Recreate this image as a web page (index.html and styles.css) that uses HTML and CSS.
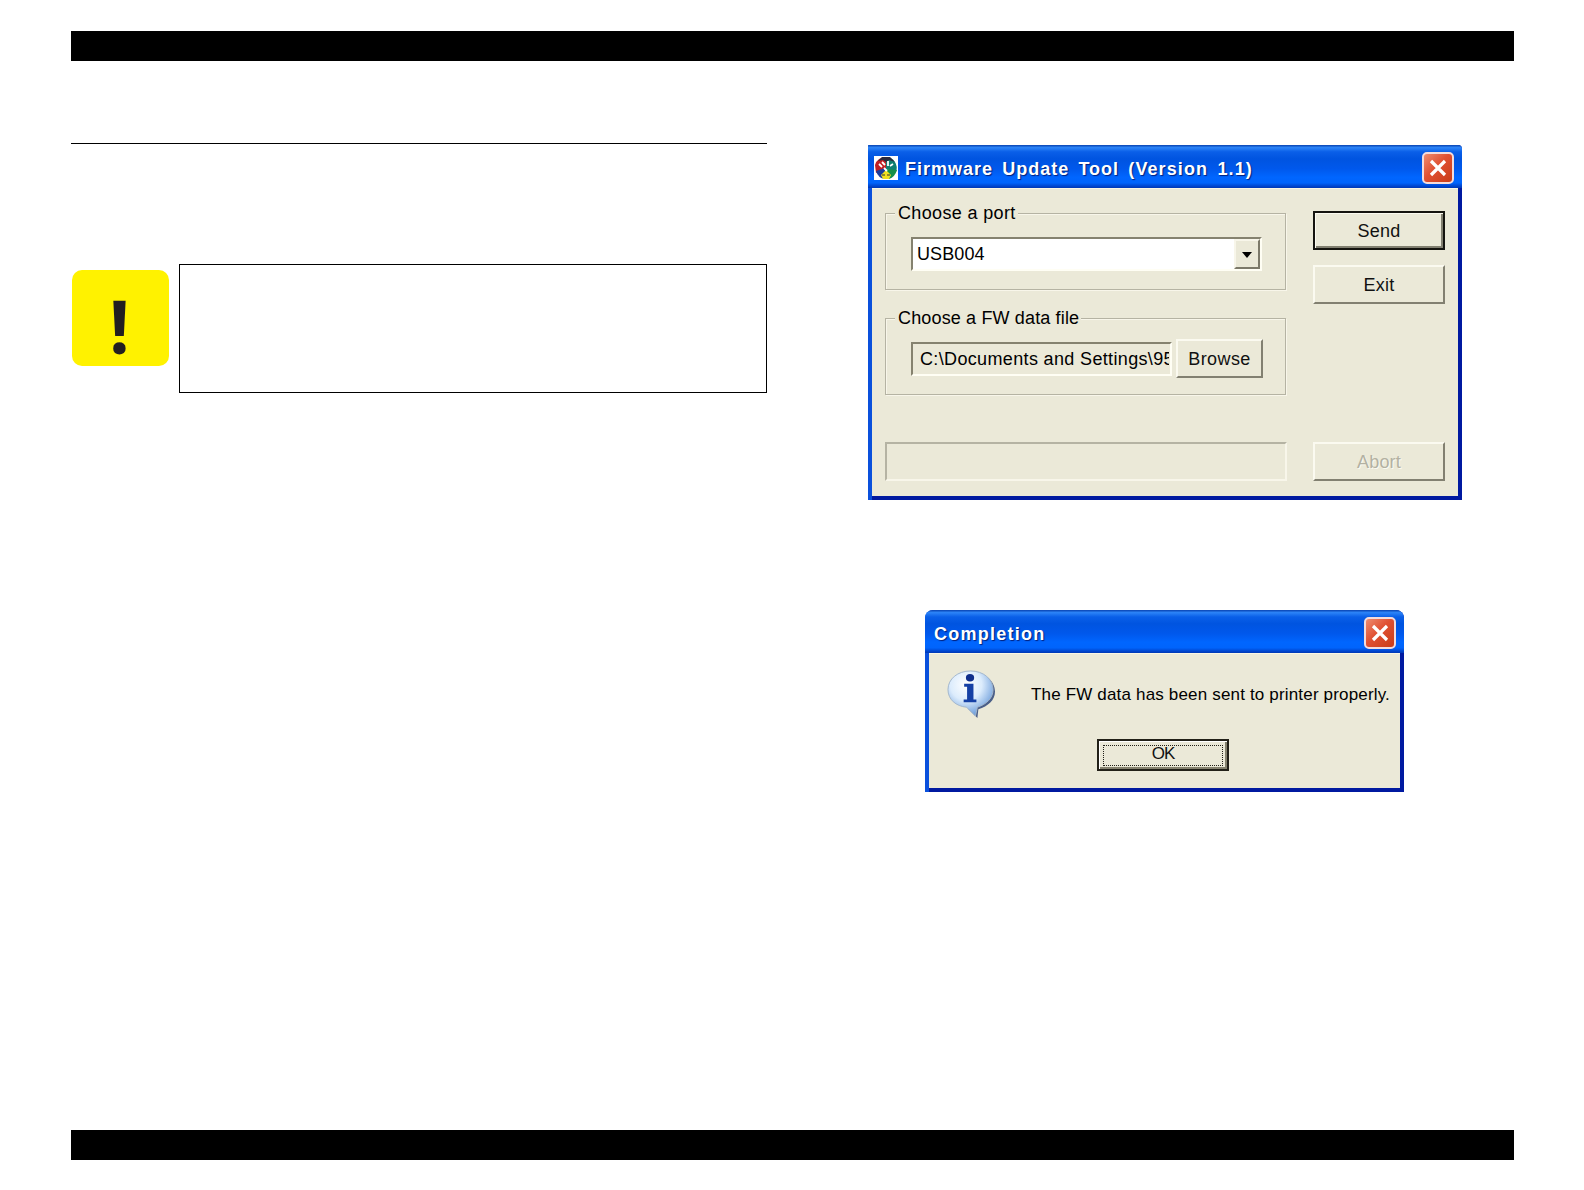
FILE: index.html
```html
<!DOCTYPE html>
<html lang="en">
<head>
  <meta charset="UTF-8">
  <meta name="viewport" content="width=device-width, initial-scale=1.0">
  <title>Firmware Update Tool</title>
  <link rel="stylesheet" href="styles.css">
</head>
<body>

  <div class="page">
    <header class="page-bar"></header>

    <main class="columns">
      <section class="left-column">
        <hr class="rule">
        <div class="caution">
          <div class="caution-icon"><span>!</span></div>
          <div class="caution-box"></div>
        </div>
      </section>

      <section class="right-column">
        <div class="window update-window">
          <div class="title-bar">
            <svg class="app-icon" viewBox="0 0 24 24">
              <rect width="24" height="24" fill="#fff"/>
              <path d="M1 9 A11 11 0 0 1 12 1 V13 L2 17 Z" fill="#c02024"/>
              <path d="M12 1 A11 11 0 0 1 22 16 L12 13 Z" fill="#0f7f72"/>
              <path d="M2 15 L11 12 V23 Q4 22 2 15 Z" fill="#1b3c9c"/>
              <path d="M12 13 L23 14 Q21 21 15 23 Z" fill="#169048"/>
              <path d="M7 19 L12 14 L17 19 L15 23 H9 Z" fill="#f3df20"/>
              <path d="M4 5 L8 1 H16 L21 6 L15 4 L12 6 L9 4 Z" fill="#2b2a3c"/>
              <path d="M5 8 L8 11 M8 6 L11 9 M14 5 V10 M16 10 L19 8 M10 12 L13 15" stroke="#fff" stroke-width="1.8"/>
              <path d="M8 19 H11 M13 19 H16" stroke="#333" stroke-width="1.2"/>
            </svg>
            <h1 class="title">Firmware Update Tool <span class="version">(Version 1.1)</span></h1>
            <button class="close-button" aria-label="Close">
              <svg viewBox="0 0 18 18"><path d="M2 2 L16 16 M16 2 L2 16"/></svg>
            </button>
          </div>

          <div class="window-body update-body">
            <div class="fields">
              <fieldset class="group">
                <legend class="port-legend">Choose a port</legend>
                <div class="combo">
                  <span class="combo-value">USB004</span>
                  <button class="combo-button" aria-label="Open list"><i class="arrow"></i></button>
                </div>
              </fieldset>
              <fieldset class="group file-group">
                <legend class="file-legend">Choose a FW data file</legend>
                <div class="file-row">
                  <div class="file-path"><span>C:\Documents and Settings\95</span></div>
                  <button class="button browse-button">Browse</button>
                </div>
              </fieldset>
              <div class="progress"></div>
            </div>
            <div class="actions">
              <button class="button default-button">Send</button>
              <button class="button">Exit</button>
              <button class="button abort-button" disabled>Abort</button>
            </div>
          </div>
        </div>

        <div class="window completion-window">
          <div class="title-bar">
            <h1 class="title completion-title">Completion</h1>
            <button class="close-button" aria-label="Close">
              <svg viewBox="0 0 18 18"><path d="M2 2 L16 16 M16 2 L2 16"/></svg>
            </button>
          </div>
          <div class="window-body completion-body">
            <div class="message-row">
              <svg class="info-icon" viewBox="0 0 50 50">
                <defs>
                  <radialGradient id="bubble" cx="0.4" cy="0.3" r="0.7">
                    <stop offset="0" stop-color="#fff"/>
                    <stop offset="0.5" stop-color="#dcecfc"/>
                    <stop offset="1" stop-color="#6c9ddb"/>
                  </radialGradient>
                </defs>
                <path d="M26 3 C39 3 49 11 49 22 C49 31 42 37 32 40 L31 49 L22 40 Z" fill="#4b5f88"/>
                <path d="M24 1 C37 1 47 9 47 20 C47 29 40 35 31 38 L29 47 L20 38 C9 37 1 30 1 20 C1 9 11 1 24 1 Z" fill="url(#bubble)" stroke="#a3b6cc" stroke-width="1"/>
                <ellipse cx="23.5" cy="8" rx="4.2" ry="3.8" fill="#102f8c"/>
                <path d="M17.5 14 H27 V30 H30 V33 H17 V30 H20.5 V17 H17.5 Z" fill="#1540a5"/>
              </svg>
              <p class="message">The FW data has been sent to printer properly.</p>
            </div>
            <button class="button ok-button"><span>OK</span></button>
          </div>
        </div>
      </section>
    </main>

    <footer class="page-bar"></footer>
  </div>

</body>
</html>
```
FILE: styles.css
```css
* {
  box-sizing: border-box;
}
body {
  margin: 0;
  background-color: #fff;
  font-family: "Liberation Sans", Arial, sans-serif;
}
.page {
  display: flex;
  flex-direction: column;
  width: 1584px;
  height: 1190px;
  padding: 31px 70px 30px 71px;
}
.page-bar {
  flex: none;
  height: 30px;
  background-color: #000;
}
.columns {
  display: flex;
  flex: 1;
  gap: 101px;
}

/* Left column */
.left-column {
  width: 696px;
  padding-top: 82px;
}
.rule {
  height: 1px;
  margin: 0 0 120px;
  border: none;
  background-color: #000;
}
.caution {
  display: flex;
  justify-content: space-between;
}
.caution-icon {
  display: flex;
  justify-content: center;
  width: 97px;
  height: 96px;
  margin: 6px 0 0 1px;
  border-radius: 10px;
  background-color: #fff200;
  color: #231f20;
  font: bold 73px/97px "Open Sans", sans-serif;
}
.caution-icon span {
  padding: 7px 2px 0 0;
}
.caution-box {
  width: 588px;
  height: 129px;
  border: 1px solid #000;
}

/* Windows */
.right-column {
  padding-top: 84px;
}
.window {
  display: flex;
  flex-direction: column;
  border-radius: 8px 8px 0 0;
  background: linear-gradient(90deg, #0a50dc 0, #0a50dc 50%, #0019a0 100%);
}
.update-window {
  width: 594px;
  height: 355px;
  border-radius: 1px 4px 0 0;
}
.completion-window {
  width: 479px;
  height: 182px;
  margin: 110px 0 0 57px;
}
.title-bar {
  display: flex;
  flex: none;
  align-items: center;
  height: 43px;
  padding: 3px 8px 0 6px;
  border-radius: inherit;
  background: linear-gradient(#0842b0 0, #2c84f8 6%, #0a5fe8 16%, #0054e0 32%, #0058ec 55%, #0066ff 75%, #0064fc 88%, #0044cc 96%, #0038b4 100%);
}
.app-icon {
  width: 24px;
  height: 24px;
  margin-right: 7px;
}
.title {
  flex: 1;
  margin: 0;
  padding-top: 2px;
  color: #fff;
  font-size: 18px;
  line-height: 24px;
  letter-spacing: 1px;
  word-spacing: 3.2px;
  white-space: nowrap;
  text-shadow: 1px 1px 1px #00207c;
}
.version {
  letter-spacing: 1.1px;
}
.completion-title {
  padding-left: 3px;
  letter-spacing: 1.25px;
}
.close-button {
  display: flex;
  align-items: center;
  justify-content: center;
  width: 32px;
  height: 32px;
  padding: 0;
  border: 2px solid #f4dcdc;
  border-radius: 5px;
  background: linear-gradient(135deg, #ee8c70, #e05032 45%, #c83c18);
}
.close-button svg {
  width: 18px;
  height: 18px;
  fill: none;
  stroke: #fff;
  stroke-width: 3.2;
}
.window-body {
  flex: 1;
  margin: 0 4px 4px;
  border: 1px solid #fbf6e4;
  border-width: 1px 0 0;
  background-color: #ebe9d8;
  box-shadow: 0 4px 0 #0019a0;
}

/* Update window */
.update-body {
  display: flex;
  gap: 26px;
  padding: 14px 12px 14px 13px;
  font-size: 18px;
}
.fields {
  display: flex;
  flex-direction: column;
  width: 402px;
}
.group {
  min-width: 0;
  height: 87px;
  margin: 0 1px 0 0;
  padding: 14px 0 0 25px;
  border: 1px solid #b5b3a3;
  box-shadow: 1px 1px #f8f6ea, inset 1px 1px #f8f6ea;
}
.group legend {
  height: 20px;
  margin-left: -16px;
  padding: 0 2px 0 3px;
  background-color: #ebe9d8;
  line-height: 21px;
  white-space: nowrap;
}
.port-legend {
  letter-spacing: 0.35px;
}
.file-legend {
  letter-spacing: 0.15px;
}
.file-group {
  margin-top: 18px;
}
.combo,
.file-path {
  border: 2px solid;
  border-color: #85826f #fffef4 #fffef4 #85826f;
}
.combo {
  display: flex;
  width: 351px;
  height: 34px;
  background-color: #fff;
}
.combo-value {
  flex: 1;
  padding-left: 4px;
  line-height: 31px;
  letter-spacing: 0.1px;
}
.combo-button {
  width: 26px;
  padding: 0;
  border: 2px solid;
  border-color: #f8f6ea #7c7969 #7c7969 #f8f6ea;
  background-color: #ebe9d8;
}
.arrow {
  display: block;
  margin: 2px auto 0;
  width: 0;
  border: 5.5px solid transparent;
  border-top: 6px solid #000;
  border-bottom: none;
}
.file-row {
  display: flex;
  gap: 4px;
}
.file-path {
  width: 261px;
  height: 34px;
  padding-left: 7px;
  padding-right: 1px;
  line-height: 30px;
  letter-spacing: 0.35px;
  white-space: nowrap;
}
.file-path span {
  display: block;
  overflow: hidden;
}
.progress {
  height: 39px;
  margin: auto 0 1px;
  border: 2px solid;
  border-color: #b5b3a3 #f8f6ea #f8f6ea #b5b3a3;
}
.actions {
  display: flex;
  flex-direction: column;
  gap: 15px;
  padding-top: 8px;
}
.button {
  width: 132px;
  height: 39px;
  padding: 0;
  border: 2px solid;
  border-color: #fbfaf0 #828071 #828071 #fbfaf0;
  background-color: #ebe9d8;
  color: #111;
  font: 18px/20px "Liberation Sans", Arial, sans-serif;
  letter-spacing: 0.2px;
}
.default-button {
  border-color: #15140f;
  box-shadow: inset 1px 1px #fbfaf0, inset -2px -2px #828071;
}
.abort-button {
  margin: auto 0 1px;
  color: #b3b1a2;
  text-shadow: 1px 1px 0 #fbfaf0;
}
.browse-button {
  width: 87px;
  margin-top: -3px;
  letter-spacing: 0.4px;
}

/* Completion window */
.completion-body {
  display: flex;
  flex-direction: column;
  padding: 16px 0 0 18px;
}
.message-row {
  display: flex;
}
.info-icon {
  width: 49px;
  height: 49px;
}
.message {
  margin: 14px 0 0 35px;
  font-size: 17px;
  line-height: 22px;
  letter-spacing: 0.17px;
  white-space: nowrap;
}
.ok-button {
  height: 32px;
  margin: 20px 0 0 150px;
  padding: 3px 4px;
  border-color: #222018;
  box-shadow: inset 1px 1px #fff, inset -2px -2px #85826f;
}
.ok-button span {
  display: block;
  height: 21px;
  border: 1px dotted #222018;
  font-size: 17px;
  line-height: 16px;
  letter-spacing: -1px;
}
```
